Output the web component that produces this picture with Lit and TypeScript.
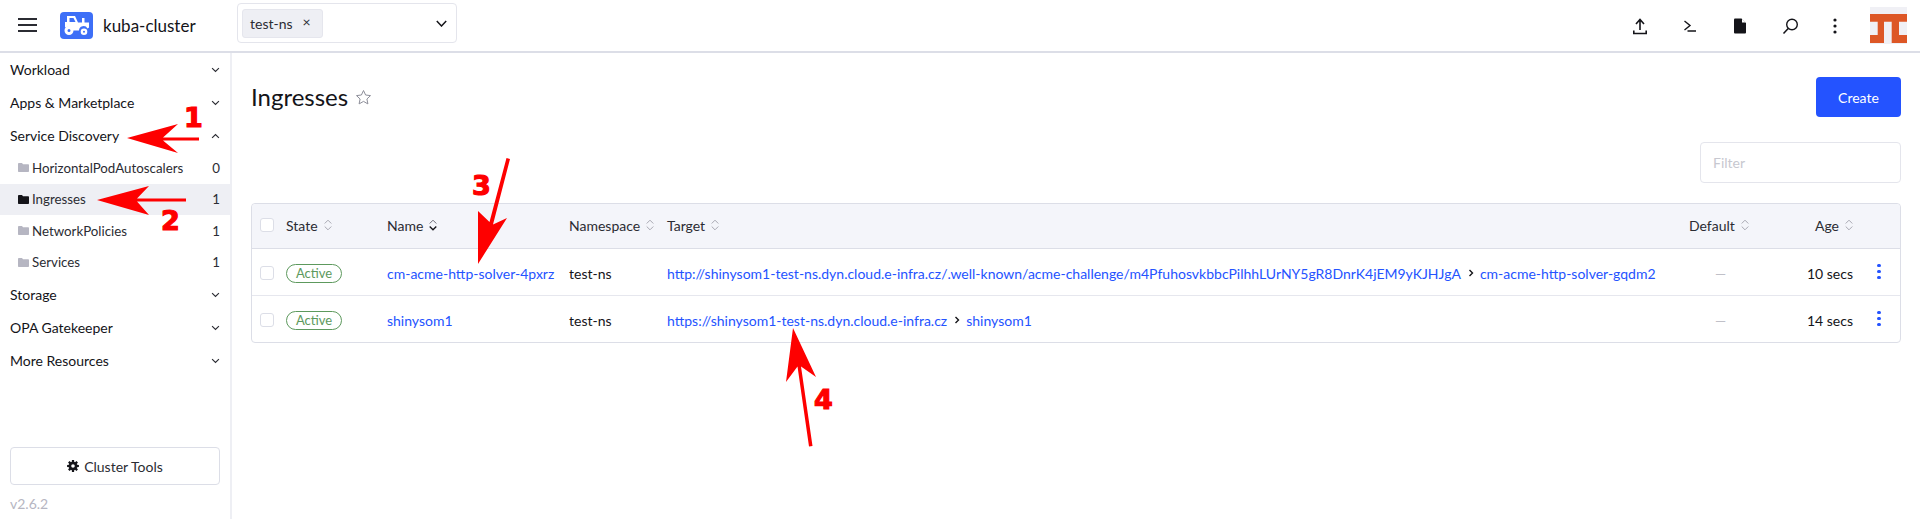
import { LitElement, html, css, svg } from "lit";
import { customElement } from "lit/decorators.js";

const chevDown = html`<svg class="chev" viewBox="0 0 10 6"><path d="M1.2 1l3.8 3.600L8.800 1" fill="none" stroke="#2b2c33" stroke-width="1.300"/></svg>`;
const chevUp = html`<svg class="chev" viewBox="0 0 10 6"><path d="M1.200 5L5 1.400 8.800 5" fill="none" stroke="#2b2c33" stroke-width="1.300"/></svg>`;
const folder = (active: boolean) => html`<svg class="folder" viewBox="0 0 11 9"><path d="M0 1.200C0 .5.4 0 1 0h3l1 1.300h5c.6 0 1 .4 1 1V8c0 .6-.4 1-1 1H1C.4 9 0 8.600 0 8z" fill=${active ? "#141419" : "#b6b6c2"}/></svg>`;
const sort = (active = false) => html`<svg class="sort" viewBox="0 0 8 12"><path d="M.7 4.500L4 1.200l3.300 3.300" fill="none" stroke=${active ? "#6c6c76" : "#a8a8b2"} stroke-width="1"/><path d="M.7 7.500L4 10.800l3.300-3.300" fill="none" stroke=${active ? "#141419" : "#a8a8b2"} stroke-width=${active ? 1.3 : 1}/></svg>`;
const arrowRight = html`<svg class="arrow" viewBox="0 0 6 8"><path d="M1.500 1l3 3-3 3" fill="none" stroke="#141419" stroke-width="1.400"/></svg>`;

const gearPoints = () => {
  const pts: string[] = [];
  for (let i = 0; i < 8; i++) {
    const a = (i * Math.PI) / 4;
    for (const [off, r] of [[-0.28, 4.3], [-0.18, 6], [0.18, 6], [0.28, 4.3]]) {
      pts.push(`${(6 + r * Math.sin(a + off)).toFixed(2)} ${(6 - r * Math.cos(a + off)).toFixed(2)}`);
    }
  }
  return `M${pts.join("L")}Z M6 4.200a1.800 1.800 0 1 0 0 3.600 1.800 1.800 0 0 0 0-3.600z`;
};

const navTop = [["Workload"], ["Apps & Marketplace"]];
const children: [string, string, boolean][] = [
  ["HorizontalPodAutoscalers", "0", false],
  ["Ingresses", "1", true],
  ["NetworkPolicies", "1", false],
  ["Services", "1", false],
];
const headers: [string, boolean][] = [
  ["State", false],
  ["Name", true],
  ["Namespace", false],
  ["Target", false],
  ["Default", false],
];
const rows = [
  {
    name: "cm-acme-http-solver-4pxrz",
    url: "http://shinysom1-test-ns.dyn.cloud.e-infra.cz/.well-known/acme-challenge/m4PfuhosvkbbcPilhhLUrNY5gR8DnrK4jEM9yKJHJgA",
    svc: "cm-acme-http-solver-gqdm2",
    age: "10 secs",
  },
  { name: "shinysom1", url: "https://shinysom1-test-ns.dyn.cloud.e-infra.cz", svc: "shinysom1", age: "14 secs" },
];

const arrows = svg`
  <g fill="#fe0000" stroke="none">
    <path d="M127 138L178 124 163 137.500H199V140.500H163L178 153Z"/>
    <path d="M97 200L149 186 137 198.500H186V201.500H137L149 215Z"/>
    <path d="M478 264L478 211 489.500 222 506.500 158 510 159 493 224.500 507 218Z"/>
    <path d="M793 328L816 377 801 366.500 812.500 446 809 446.500 797.500 366.500 786 382Z"/>
  </g>`;

@customElement("app-root")
export class AppRoot extends LitElement {
  static styles = css`
    :host { display: block; width: 1920px; height: 519px; position: relative; overflow: hidden; background: #fff; color: #141419; font-family: Lato, "Liberation Sans", sans-serif; font-size: 14px; }
    * { box-sizing: border-box; }
    .header { height: 53px; border-bottom: 2px solid #dcdee7; display: flex; align-items: center; }
    .menu { width: 19px; margin-left: 18px; margin-top: -1px; display: flex; flex-direction: column; gap: 4px; }
    .menu i { display: block; height: 2px; background: #2b2c33; }
    .logo { width: 33px; height: 27px; margin-left: 23px; border-radius: 4px; background: #3d6ff7; display: flex; align-items: center; justify-content: center; }
    .logo svg { width: 26px; height: 21px; }
    .cluster { margin-left: 10px; font-size: 17px; width: 134px; }
    .ns { width: 220px; height: 40px; align-self: flex-start; margin-top: 3px; border: 1px solid #e4e5ec; border-radius: 4px; padding: 0 4px; display: flex; align-items: center; justify-content: space-between; }
    .tag { height: 29px; width: 81px; background: #eeeff4; border: 1px solid #e5e6ed; border-radius: 3px; padding-left: 7px; display: flex; align-items: center; gap: 10px; font-size: 14px; color: #2b2c33; }
    .tag span { font-size: 14px; line-height: 1; margin-top: -2px; }
    .ns svg { width: 11px; height: 7px; margin-right: 5px; }
    .spacer { flex: 1; }
    .tools { display: flex; align-items: center; margin-right: 13px; }
    .tool { width: 50px; height: 30px; display: flex; align-items: center; justify-content: center; }
    .tool.more { width: 40px; }
    .tool svg { width: 18px; height: 20px; }
    .avatar { width: 37px; height: 37px; margin-left: 15px; display: block; }
    .body { display: flex; height: 466px; }
    .side { width: 232px; border-right: 2px solid #eeeff4; display: flex; flex-direction: column; flex: none; }
    .group { height: 33px; padding: 0 10px; display: flex; align-items: center; justify-content: space-between; font-size: 14px; }
    .chev { width: 9px; height: 6px; }
    .child { height: 31.500px; padding: 0 10px 0 18px; display: flex; align-items: center; color: #2b2c33; font-size: 13.300px; }
    .child.on { background: #eeeff4; }
    .folder { width: 11px; height: 9px; margin-right: 3px; flex: none; }
    .child b { font-weight: 400; margin-left: auto; }
    .side .fill { flex: 1; }
    .ct { margin: 0 10px; height: 38px; border: 1px solid #dcdee7; border-radius: 4px; display: flex; align-items: center; justify-content: center; gap: 5px; font-size: 14px; color: #2b2c33; }
    .ct svg { width: 12px; height: 12px; }
    .ver { margin: 10px 10px 7px; font-size: 14px; height: 17px; line-height: 17px; color: #b6b6c2; }
    .main { flex: 1; padding: 24px 19px 0 19px; }
    .top { display: flex; align-items: flex-start; justify-content: space-between; height: 65px; }
    h1 { margin: 0; font-size: 24px; font-weight: 400; line-height: 40px; display: flex; align-items: center; gap: 7px; }
    h1 svg { width: 17px; height: 17px; }
    .create { width: 85px; height: 40px; background: #2453ff; border-radius: 4px; color: #fff; display: flex; align-items: center; justify-content: center; font-size: 14px; }
    .filterRow { display: flex; justify-content: flex-end; height: 61px; }
    .filter { width: 201px; height: 41px; border: 1px solid #e4e5ec; border-radius: 4px; padding-left: 12px; display: flex; align-items: center; color: #c7c8d0; font-size: 14px; }
    .table { border: 1px solid #dcdee7; border-radius: 4px; width: 1650px; }
    .row { display: grid; grid-template-columns: 34px 101px 182px 98px 1022px 105px 59px 1fr; align-items: center; }
    .row.head { height: 45px; padding-bottom: 2px; background: #f4f5fa; border-bottom: 1px solid #dcdee7; border-radius: 4px 4px 0 0; color: #2b2c33; }
    .row.data { height: 47px; padding-top: 2px; border-bottom: 1px solid #e6e7ee; color: #141419; }
    .row.data:last-child { border-bottom: none; height: 46px; }
    .cb { width: 14px; height: 14px; margin-left: 8px; border: 1px solid #dcdee7; border-radius: 3px; background: #fff; }
    .th { display: flex; align-items: center; gap: 6px; white-space: nowrap; }
    .sort { width: 8px; height: 12px; flex: none; }
    .r { justify-content: flex-end; text-align: right; white-space: nowrap; }
    a { color: #2453ff; text-decoration: none; white-space: nowrap; }
    .badge { width: 56px; height: 19px; border: 1px solid #5d995d; border-radius: 10px; color: #5d995d; font-size: 13px; display: flex; align-items: center; justify-content: center; }
    .target { display: flex; align-items: center; white-space: nowrap; }
    .arrow { width: 6px; height: 8px; margin: 0 6px 0 7px; }
    .dash { color: #c0c0c8; padding-left: 26px; }
    .dots { display: flex; flex-direction: column; gap: 2.500px; align-items: center; width: 4px; margin-left: 24px; margin-top: -3px; }
    .dots i { width: 3.500px; height: 3.500px; border-radius: 50%; background: #2453ff; }
    .overlay { position: absolute; inset: 0; width: 1920px; height: 519px; pointer-events: none; }
    .overlay text { font-family: "DejaVu Sans", sans-serif; font-weight: 700; font-size: 27px; fill: #fe0000; stroke: #fe0000; stroke-width: 1.200; }
  `;

  render() {
    return html`
      <div class="header">
        <div class="menu"><i></i><i></i><i></i></div>
        <div class="logo">
          <svg viewBox="0 0 26 21">
            <path fill="#fff" fill-rule="evenodd" d="M3 1h8l3 6.500h4V3h2.500v4.500H25v5l-1.500 1A4.500 4.500 0 0 0 15 15.500H9A5.500 5.500 0 0 0 1 12.500V7h2zM5.500 3v4h6l-2-4z"/>
            <path fill="#fff" fill-rule="evenodd" d="M5 11a4.500 4.500 0 1 1 0 9 4.500 4.500 0 0 1 0-9zm0 3a1.500 1.500 0 1 0 0 3 1.500 1.500 0 0 0 0-3zM20 13.500a3.300 3.300 0 1 1 0 6.600 3.300 3.300 0 0 1 0-6.600zm0 2.300a1 1 0 1 0 0 2 1 1 0 0 0 0-2z"/>
          </svg>
        </div>
        <div class="cluster">kuba-cluster</div>
        <div class="ns">
          <div class="tag">test-ns <span>×</span></div>
          <svg viewBox="0 0 11 7"><path d="M.8 1L5.500 6l4.700-5" fill="none" stroke="#141419" stroke-width="1.500"/></svg>
        </div>
        <div class="spacer"></div>
        <div class="tools">
          <div class="tool"><svg viewBox="0 0 18 20"><path d="M9 14V4M5 8l4-4.500L13 8M2.800 14.500v3h12.400v-3" fill="none" stroke="#141419" stroke-width="1.600"/></svg></div>
          <div class="tool"><svg viewBox="0 0 18 20"><path d="M3.500 5L9 9.500 3.500 14M6.500 15H15" fill="none" stroke="#141419" stroke-width="1.400"/></svg></div>
          <div class="tool"><svg viewBox="0 0 18 20"><path fill="#141419" d="M3 3.500a1 1 0 0 1 1-1h6.500L15 7v9.500a1 1 0 0 1-1 1H4a1 1 0 0 1-1-1z"/><path fill="#fff" d="M11 2.800V6.500h3.800z"/></svg></div>
          <div class="tool"><svg viewBox="0 0 18 20"><circle cx="11" cy="8.500" r="5.300" fill="none" stroke="#141419" stroke-width="1.400"/><path d="M7.200 12.500L2.500 17.500" stroke="#141419" stroke-width="1.600"/></svg></div>
          <div class="tool more"><svg viewBox="0 0 18 20"><circle cx="9" cy="4" r="1.600" fill="#141419"/><circle cx="9" cy="10" r="1.600" fill="#141419"/><circle cx="9" cy="16" r="1.600" fill="#141419"/></svg></div>
          <svg class="avatar" viewBox="0 0 37 37">
            <rect width="37" height="37" fill="#f0f0f5"/>
            <path fill="#dd5726" d="M0 7H37V14.700H29V28H37V36H21.700V14.700H14V36H0V28H7.700V14.700H0Z"/>
          </svg>
        </div>
      </div>
      <div class="body">
        <div class="side">
          ${navTop.map(([n]) => html`<div class="group">${n}${chevDown}</div>`)}
          <div class="group">Service Discovery${chevUp}</div>
          ${children.map(([n, c, on]) => html`<div class="child ${on ? "on" : ""}">${folder(on)}<span>${n}</span><b>${c}</b></div>`)}
          <div class="group">Storage${chevDown}</div>
          <div class="group">OPA Gatekeeper${chevDown}</div>
          <div class="group">More Resources${chevDown}</div>
          <div class="fill"></div>
          <div class="ct">
            <svg viewBox="0 0 12 12"><path fill="#141419" fill-rule="evenodd" d=${gearPoints()}/></svg>
            Cluster Tools
          </div>
          <div class="ver">v2.6.2</div>
        </div>
        <div class="main">
          <div class="top">
            <h1>Ingresses
              <svg viewBox="0 0 17 17"><path d="M8.500 1.500l2.100 4.500 4.900.6-3.600 3.400 1 4.900-4.400-2.500-4.400 2.500 1-4.900L1.500 6.600l4.900-.6z" fill="none" stroke="#8d8e99" stroke-width="1"/></svg>
            </h1>
            <div class="create">Create</div>
          </div>
          <div class="filterRow"><div class="filter">Filter</div></div>
          <div class="table">
            <div class="row head">
              <div class="cb"></div>
              ${headers.map(([h, a]) => html`<div class="th">${h}${sort(a)}</div>`)}
              <div class="th r">Age${sort()}</div>
              <div></div>
            </div>
            ${rows.map((r) => html`
              <div class="row data">
                <div class="cb"></div>
                <div><div class="badge">Active</div></div>
                <a>${r.name}</a>
                <div>test-ns</div>
                <div class="target"><a>${r.url}</a>${arrowRight}<a>${r.svc}</a></div>
                <div class="dash">—</div>
                <div class="r">${r.age}</div>
                <div class="dots"><i></i><i></i><i></i></div>
              </div>`)}
          </div>
        </div>
      </div>
      <svg class="overlay" viewBox="0 0 1920 519">
        ${arrows}
        <text x="184" y="127">1</text>
        <text x="161" y="230">2</text>
        <text x="472" y="195">3</text>
        <text x="814" y="409">4</text>
      </svg>
    `;
  }
}
